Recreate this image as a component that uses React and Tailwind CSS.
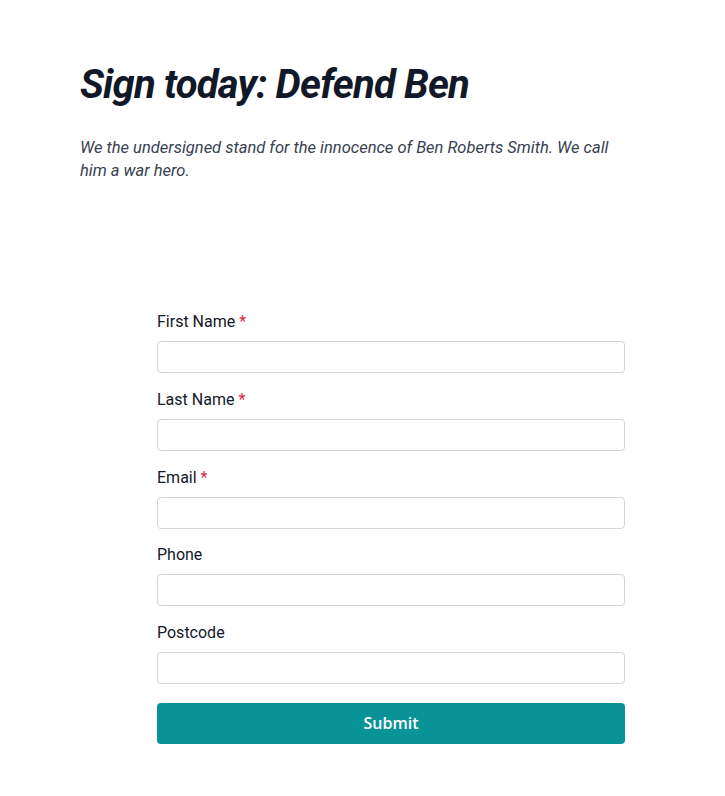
import React from 'react'

const fields = [
  { label: 'First Name', required: true },
  { label: 'Last Name', required: true },
  { label: 'Email', required: true },
  { label: 'Phone' },
  { label: 'Postcode' },
]

export default function App() {
  return (
    <div className="min-h-[796px] bg-white px-20 pt-[57px] font-['Roboto',sans-serif]">
      <h1 className="text-[40px] leading-[56px] font-bold italic tracking-[-0.02em] text-[#111827]">
        Sign today: Defend Ben
      </h1>
      <p className="mt-[23px] max-w-[545px] text-[16.5px] leading-[23px] italic text-[#374151]">
        We the undersigned stand for the innocence of Ben Roberts Smith. We call him a war hero.
      </p>

      <form className="mt-[128px] ml-[77px] w-[468px] flex flex-col" onSubmit={(e) => e.preventDefault()}>
        {fields.map((f) => (
          <div key={f.label} className="mb-[14.75px] flex flex-col">
            <label className="text-base leading-6 text-[#111827]">
              {f.label}
              {f.required && <span className="ml-1 text-[#e11d48]">*</span>}
            </label>
            <input
              type="text"
              className="mt-[7px] h-8 rounded-[4px] border border-[#d4d4dc] bg-white px-2 outline-none"
            />
          </div>
        ))}
        <button
          type="submit"
          className="mt-1 h-[41px] rounded-[4px] bg-[#0a9396] text-base font-semibold text-white font-['Open_Sans',sans-serif]"
        >
          Submit
        </button>
      </form>
    </div>
  )
}
